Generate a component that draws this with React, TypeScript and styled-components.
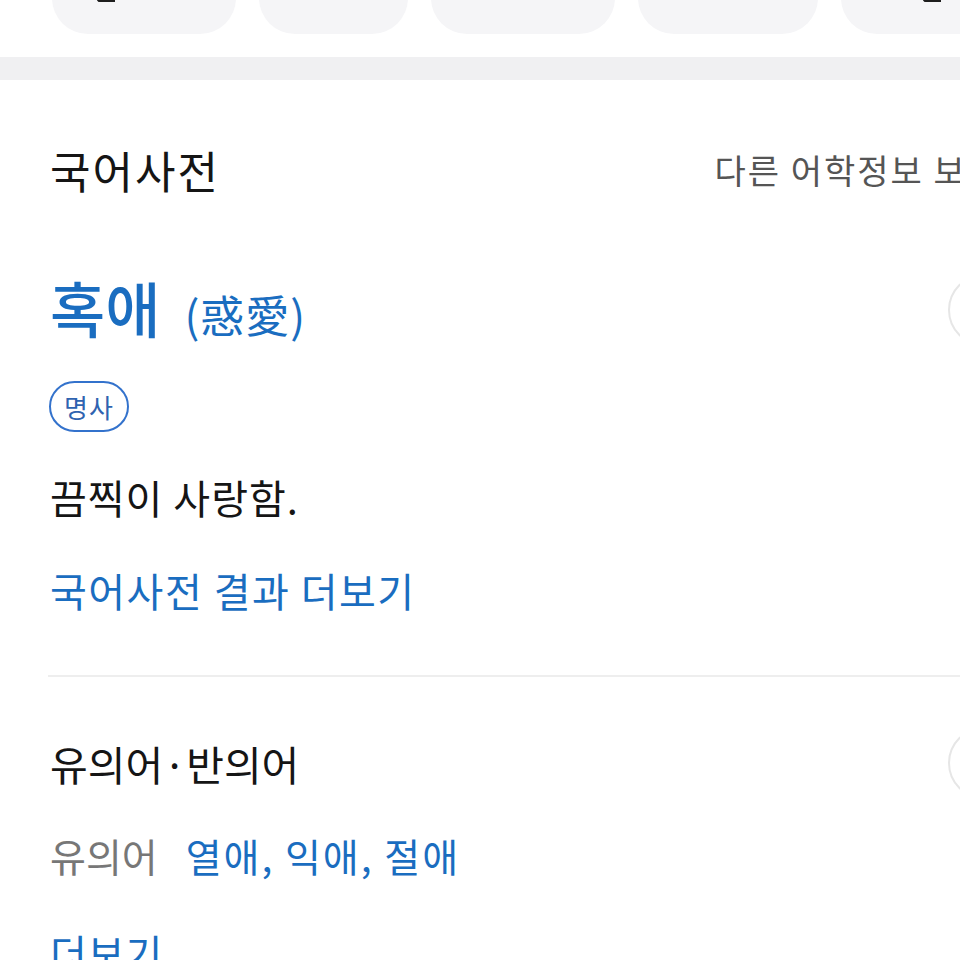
import React from "react";
import styled, { createGlobalStyle } from "styled-components";

const Global = createGlobalStyle`
  html, body { margin: 0; padding: 0; background: #ffffff; }
  body { font-family: "Noto Sans CJK KR", "Noto Sans", sans-serif; }
  #root { width: 960px; overflow: hidden; }
`;

const Page = styled.div`
  width: 1040px;
  background: #ffffff;
`;

const ChipStrip = styled.div`
  height: 34px;
  overflow: hidden;
  display: flex;
  gap: 23px;
  padding-left: 52px;
`;

const Chip = styled.div<{ $w: number }>`
  flex: 0 0 ${(p) => p.$w}px;
  height: 72px;
  margin-top: -38px;
  border-radius: 36px;
  background: #f5f5f7;
  position: relative;
`;

const ChipMark = styled.span<{ $left: number }>`
  position: absolute;
  top: 34px;
  left: ${(p) => p.$left}px;
  width: 18px;
  height: 6px;
  box-sizing: border-box;
  border-left: 3px solid #1e1e1e;
  border-bottom: 3px solid #1e1e1e;
  border-bottom-left-radius: 3px;
`;

const Band = styled.div`
  margin-top: 23px;
  height: 23px;
  background: #f0f0f2;
`;

const Section = styled.section`
  padding: 0 20px 0 48px;
  display: flex;
  flex-direction: column;
`;

const Header = styled.div`
  margin-top: 66px;
  display: flex;
  align-items: center;
  justify-content: space-between;
  height: 48px;
`;

const Title = styled.h2<{ $size: number; $ls: number }>`
  margin: 0 0 0 2px;
  font-size: ${(p) => p.$size}px;
  font-weight: 400;
  line-height: 48px;
  color: #151515;
  letter-spacing: ${(p) => p.$ls}px;
  white-space: nowrap;
`;

const OtherLink = styled.span`
  font-size: 34px;
  line-height: 48px;
  color: #555555;
  white-space: nowrap;
  letter-spacing: 2px;
  margin-right: 20px;
`;

const WordRow = styled.div<{ $mt: number }>`
  margin-top: ${(p) => p.$mt}px;
  display: flex;
  align-items: center;
  justify-content: space-between;
  height: 76px;
`;

const Word = styled.div`
  display: flex;
  align-items: baseline;
  gap: 24px;
  margin-left: 2px;
`;

const Head = styled.span`
  font-size: 60px;
  font-weight: 500;
  color: #1a6dc0;
  line-height: 70px;
`;

const Hanja = styled.span`
  font-size: 44px;
  color: #1a6dc0;
  line-height: 70px;
  letter-spacing: 1px;
`;

const RoundButton = styled.div`
  width: 72px;
  height: 72px;
  border-radius: 50%;
  border: 2px solid #e6e6e6;
  box-sizing: border-box;
  flex: 0 0 auto;
`;

const Pill = styled.span`
  margin-top: 33px;
  align-self: flex-start;
  box-sizing: border-box;
  width: 80px;
  height: 51px;
  border: 2.5px solid #3372cc;
  border-radius: 26px;
  display: flex;
  align-items: center;
  justify-content: center;
  font-size: 26px;
  color: #2f63b0;
  margin-left: 1px;
  letter-spacing: 1px;
`;

const Text = styled.p<{ $mt: number; $color?: string; $ls?: number }>`
  margin: ${(p) => p.$mt}px 0 0 2px;
  font-size: 40px;
  line-height: 44px;
  color: ${(p) => p.$color || "#151515"};
  letter-spacing: ${(p) => p.$ls ?? 1}px;
  white-space: nowrap;
`;

const Divider = styled.hr`
  margin: 63px 0 0 0;
  border: 0;
  height: 2px;
  background: #eeeeee;
`;

const SynRow = styled.div`
  margin: 32px 0 0 2px;
  display: flex;
  align-items: center;
  gap: 28px;
  font-size: 39px;
  line-height: 44px;
`;

const SynLabel = styled.span`
  color: #777777;
`;

const SynList = styled.span`
  color: #1a6dc0;
  letter-spacing: 2px;
`;

export default function App() {
  return (
    <Page>
      <Global />
      <ChipStrip>
        <Chip $w={184}>
          <ChipMark $left={45} />
        </Chip>
        <Chip $w={149} />
        <Chip $w={184} />
        <Chip $w={180} />
        <Chip $w={184}>
          <ChipMark $left={82} />
        </Chip>
      </ChipStrip>
      <Band />
      <Section>
        <Header>
          <Title $size={44} $ls={2}>국어사전</Title>
          <OtherLink>다른 어학정보 보기</OtherLink>
        </Header>
        <WordRow $mt={78}>
          <Word>
            <Head>혹애</Head>
            <Hanja>(惑愛)</Hanja>
          </Word>
          <RoundButton />
        </WordRow>
        <Pill>명사</Pill>
        <Text $mt={43}>끔찍이 사랑함.</Text>
        <Text $mt={49} $color="#1a6dc0" $ls={1.5}>
          국어사전 결과 더보기
        </Text>
        <Divider />
        <WordRow $mt={48}>
          <Title $size={41} $ls={0}>유의어·반의어</Title>
          <RoundButton />
        </WordRow>
        <SynRow>
          <SynLabel>유의어</SynLabel>
          <SynList>열애, 익애, 절애</SynList>
        </SynRow>
        <Text $mt={53} $color="#1a6dc0">
          더보기
        </Text>
      </Section>
    </Page>
  );
}
